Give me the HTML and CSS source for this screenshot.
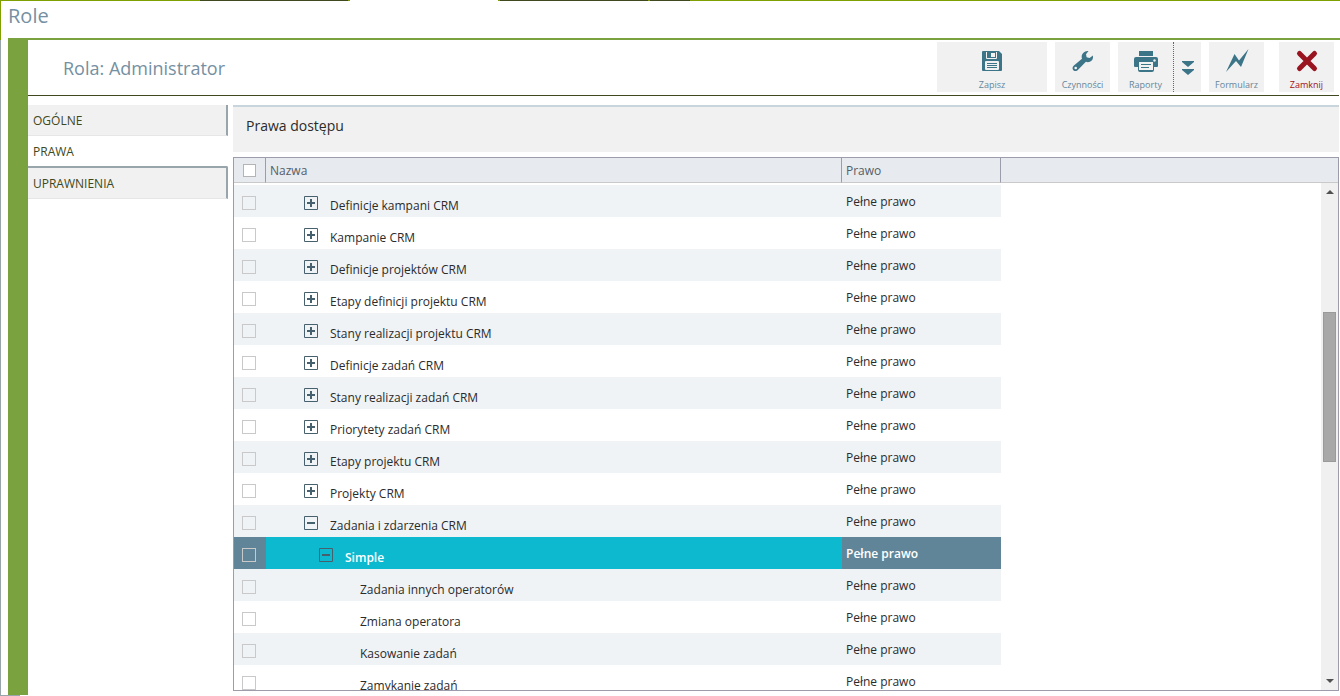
FILE: index.html
```
<!DOCTYPE html>
<html lang="pl">
<head>
<meta charset="utf-8">
<title>Role</title>
<link rel="stylesheet" href="styles.css">
</head>
<body>
<svg class="defs" aria-hidden="true">
  <symbol id="plus" viewBox="0 0 14 14"><path d="M.5.5h13v13H.5z" fill="none" stroke="currentColor"/><path d="M3 6h3V3h2v3h3v2H8v3H6V8H3z" fill="currentColor"/></symbol>
  <symbol id="minus" viewBox="0 0 14 14"><path d="M.5.5h13v13H.5z" fill="none" stroke="currentColor"/><path d="M3 6h8v2H3z" fill="currentColor"/></symbol>
</svg>
<div class="app">
  <div class="strip"></div>
  <h1 class="page-title">Role</h1>
  <main class="panel">
    <header class="panel-head">
      <h2 class="panel-title">Rola: Administrator</h2>
      <div class="toolbar">
        <button class="tool tool-wide" type="button">
          <svg class="tool-icon" viewBox="0 0 24 24"><path fill="currentColor" d="M2 3q0-1 1-1h16l3 3v16q0 1-1 1H3q-1 0-1-1z"/><path fill="#f1f1f1" d="M6 3h11v6q0 1-1 1H7q-1 0-1-1zM5 13q0-1 1-1h12q1 0 1 1v7q0 1-1 1H6q-1 0-1-1z"/><path fill="currentColor" d="M7 3h9v6H7z"/><path fill="#f1f1f1" d="M11 4h4v4h-4z"/><path fill="currentColor" d="M7 14h10v1H7zM7 16h10v1H7zM7 18h10v1H7z"/></svg>
          <span>Zapisz</span>
        </button>
        <button class="tool" type="button">
          <svg class="tool-icon" viewBox="0 0 24 24"><path fill="currentColor" d="M17.500 2.100 15 5.300l.6 3 3 .7 3.300-2.400c.6 3-.6 5.300-3 6.200-1.500.6-2.800.5-4-.1L7.300 20.500C5.500 22.600 3 22.300 2 20.700c-.9-1.500-.4-3 .9-4.100L11 9.800C10.300 7.800 10.600 5.600 12.200 4 13.600 2.500 15.600 1.700 17.500 2.100z"/><circle cx="4.700" cy="19" r="1.300" fill="#f1f1f1"/></svg>
          <span>Czynności</span>
        </button>
        <div class="split">
          <button class="tool" type="button">
            <svg class="tool-icon" viewBox="0 0 24 24"><path fill="currentColor" d="M5 2h14v5H5zM2 8h20q2 0 2 2v7q0 1-1 1h-3v-4H4v4H1q-1 0-1-1v-7q0-2 2-2z"/><circle cx="20.500" cy="11.500" r="1.200" fill="#f1f1f1"/><path fill="#f1f1f1" d="M5 13h14v8H5z"/><path fill="currentColor" d="M4 13h1v8h14v-8h1v8q0 2-2 2H6q-2 0-2-2zM7 15h10v1H7zM7 18h8v1H7z"/></svg>
            <span>Raporty</span>
          </button>
          <button class="tool tool-more" type="button" aria-label="Więcej raportów">
            <svg class="more-icon" viewBox="0 0 12 14"><path fill="currentColor" d="M0 0h12v1L6 6 0 1zM0 8h12v1l-6 5-6-5z"/></svg>
          </button>
        </div>
        <button class="tool" type="button">
          <svg class="tool-icon" viewBox="0 0 24 24"><path fill="currentColor" d="M1 23 9.500 5l4.500 6.500L23.500 0 16 18l-5-6z"/></svg>
          <span>Formularz</span>
        </button>
        <button class="tool tool-close" type="button">
          <svg class="tool-icon" viewBox="0 0 24 24"><path fill="none" stroke="currentColor" stroke-width="5" stroke-linecap="round" d="M4.500 4.500l15 15M19.500 4.500l-15 15"/></svg>
          <span>Zamknij</span>
        </button>
      </div>
    </header>
    <div class="panel-body">
      <nav class="tabs">
        <button class="tab" type="button">OGÓLNE</button>
        <button class="tab tab-active" type="button">PRAWA</button>
        <button class="tab tab-after" type="button">UPRAWNIENIA</button>
      </nav>
      <section class="content">
        <h3 class="section-title">Prawa dostępu</h3>
        <div class="grid">
          <table class="table table-head">
            <colgroup><col class="c-check"><col class="c-name"><col class="c-right"><col></colgroup>
            <thead><tr><th><input class="check check-all" type="checkbox" aria-label="Zaznacz wszystko"></th><th>Nazwa</th><th>Prawo</th><th></th></tr></thead>
          </table>
          <div class="scroll">
            <div class="rows">
              <table class="table table-body">
                <colgroup><col class="c-check"><col class="c-name"><col class="c-right"></colgroup>
                <tbody>
                  <tr><td><input class="check" type="checkbox" aria-label="Definicje kampani CRM"></td><td><div class="node"><button class="toggle" type="button" aria-label="Rozwiń"><svg><use href="#plus"/></svg></button>Definicje kampani CRM</div></td><td>Pełne prawo</td></tr>
                  <tr><td><input class="check" type="checkbox" aria-label="Kampanie CRM"></td><td><div class="node"><button class="toggle" type="button" aria-label="Rozwiń"><svg><use href="#plus"/></svg></button>Kampanie CRM</div></td><td>Pełne prawo</td></tr>
                  <tr><td><input class="check" type="checkbox" aria-label="Definicje projektów CRM"></td><td><div class="node"><button class="toggle" type="button" aria-label="Rozwiń"><svg><use href="#plus"/></svg></button>Definicje projektów CRM</div></td><td>Pełne prawo</td></tr>
                  <tr><td><input class="check" type="checkbox" aria-label="Etapy definicji projektu CRM"></td><td><div class="node"><button class="toggle" type="button" aria-label="Rozwiń"><svg><use href="#plus"/></svg></button>Etapy definicji projektu CRM</div></td><td>Pełne prawo</td></tr>
                  <tr><td><input class="check" type="checkbox" aria-label="Stany realizacji projektu CRM"></td><td><div class="node"><button class="toggle" type="button" aria-label="Rozwiń"><svg><use href="#plus"/></svg></button>Stany realizacji projektu CRM</div></td><td>Pełne prawo</td></tr>
                  <tr><td><input class="check" type="checkbox" aria-label="Definicje zadań CRM"></td><td><div class="node"><button class="toggle" type="button" aria-label="Rozwiń"><svg><use href="#plus"/></svg></button>Definicje zadań CRM</div></td><td>Pełne prawo</td></tr>
                  <tr><td><input class="check" type="checkbox" aria-label="Stany realizacji zadań CRM"></td><td><div class="node"><button class="toggle" type="button" aria-label="Rozwiń"><svg><use href="#plus"/></svg></button>Stany realizacji zadań CRM</div></td><td>Pełne prawo</td></tr>
                  <tr><td><input class="check" type="checkbox" aria-label="Priorytety zadań CRM"></td><td><div class="node"><button class="toggle" type="button" aria-label="Rozwiń"><svg><use href="#plus"/></svg></button>Priorytety zadań CRM</div></td><td>Pełne prawo</td></tr>
                  <tr><td><input class="check" type="checkbox" aria-label="Etapy projektu CRM"></td><td><div class="node"><button class="toggle" type="button" aria-label="Rozwiń"><svg><use href="#plus"/></svg></button>Etapy projektu CRM</div></td><td>Pełne prawo</td></tr>
                  <tr><td><input class="check" type="checkbox" aria-label="Projekty CRM"></td><td><div class="node"><button class="toggle" type="button" aria-label="Rozwiń"><svg><use href="#plus"/></svg></button>Projekty CRM</div></td><td>Pełne prawo</td></tr>
                  <tr><td><input class="check" type="checkbox" aria-label="Zadania i zdarzenia CRM"></td><td><div class="node"><button class="toggle" type="button" aria-label="Zwiń"><svg><use href="#minus"/></svg></button>Zadania i zdarzenia CRM</div></td><td>Pełne prawo</td></tr>
                  <tr class="selected"><td><input class="check" type="checkbox" aria-label="Simple"></td><td><div class="node node-child"><button class="toggle" type="button" aria-label="Zwiń"><svg><use href="#minus"/></svg></button>Simple</div></td><td>Pełne prawo</td></tr>
                  <tr><td><input class="check" type="checkbox" aria-label="Zadania innych operatorów"></td><td><div class="node node-leaf">Zadania innych operatorów</div></td><td>Pełne prawo</td></tr>
                  <tr><td><input class="check" type="checkbox" aria-label="Zmiana operatora"></td><td><div class="node node-leaf">Zmiana operatora</div></td><td>Pełne prawo</td></tr>
                  <tr><td><input class="check" type="checkbox" aria-label="Kasowanie zadań"></td><td><div class="node node-leaf">Kasowanie zadań</div></td><td>Pełne prawo</td></tr>
                  <tr><td><input class="check" type="checkbox" aria-label="Zamykanie zadań"></td><td><div class="node node-leaf">Zamykanie zadań</div></td><td>Pełne prawo</td></tr>
                </tbody>
              </table>
            </div>
            <div class="scrollbar">
              <svg class="arrow" viewBox="0 0 8 4"><path d="M4 0l4 4H0z" fill="#505050"/></svg>
              <div class="track"><div class="thumb"></div></div>
              <svg class="arrow" viewBox="0 0 8 4"><path d="M0 0h8L4 4z" fill="#505050"/></svg>
            </div>
          </div>
        </div>
      </section>
    </div>
  </main>
</div>
</body>
</html>
```
FILE: styles.css
```
* { box-sizing: border-box; }
body {
  margin: 0;
  background: #fff;
  color: #2b2b2b;
  font: 12px/16px "Open Sans", "Noto Sans", sans-serif;
}
button { font: inherit; border: 0; padding: 0; margin: 0; background: none; cursor: pointer; }
h1, h2, h3 { margin: 0; font-weight: 400; }
.defs { display: none; }

.app {
  display: flex;
  flex-direction: column;
  height: 100vh;
  padding: 0 0 1px 8px;
  background:
    linear-gradient(#7ea000, #7ea000) 0 0 / 1px 40px no-repeat,
    linear-gradient(#98a5ab, #98a5ab) 0 40px / 1px 100% no-repeat,
    linear-gradient(#98a5ab, #98a5ab) 0 100% / 20px 1px no-repeat;
}
.strip {
  flex: none;
  height: 1px;
  margin-left: -8px;
  background: linear-gradient(90deg,
    #7ea000 200px, #404820 200px 348px, #7ea000 348px 350px, #fff 350px 498px,
    #7ea000 498px 500px, #404820 500px 648px, #7ea000 648px 650px,
    #404820 650px 690px, #7ea000 690px);
}
.page-title {
  flex: none;
  height: 37px;
  color: #7590a2;
  font-size: 20px;
  line-height: 30px;
}
.panel {
  flex: 1;
  min-height: 0;
  display: flex;
  flex-direction: column;
  border-top: 2px solid #7aa23f;
  border-left: 20px solid #7aa23f;
}
.panel-head {
  flex: none;
  display: flex;
  justify-content: space-between;
  height: 56px;
  padding: 2px 5px 0 35px;
  margin-right: 1px;
  border-bottom: 1px solid #404820;
}
.panel-title { color: #7590a2; font-size: 18px; line-height: 52px; }

.toolbar { display: flex; gap: 8px; height: 50px; }
.tool {
  display: flex;
  flex-direction: column;
  align-items: center;
  gap: 5px;
  width: 55px;
  height: 50px;
  padding-top: 7px;
  background: #f1f1f1;
  color: #66869a;
  font-size: 9px;
  line-height: 14px;
}
.tool-wide { width: 110px; }
.tool-icon { width: 24px; height: 24px; color: #3c7488; }
.split { display: flex; }
.tool-more { width: 28px; padding-top: 19px; border-left: 1px dotted #3c7488; }
.more-icon { width: 12px; height: 14px; color: #3c7488; }
.tool-close { margin-left: 7px; color: #a01020; }
.tool-close .tool-icon { color: #9a141f; }

.panel-body { flex: 1; min-height: 0; display: flex; gap: 5px; padding-top: 9px; }
.tabs { flex: none; width: 200px; }
.tab {
  display: block;
  width: 100%;
  height: 31px;
  padding: 2px 0 0 5px;
  text-align: left;
  color: #404820;
  background: #f1f1f1;
  border-right: 2px solid #98a5ab;
  border-bottom: 1px solid #e6e6e6;
}
.tab-active { height: 30px; background: #fff; border: 0; }
.tab-after { height: 33px; border-top: 2px solid #98a5ab; border-top-right-radius: 2px; }

.content { flex: 1; min-width: 0; display: flex; flex-direction: column; gap: 5px; padding: 0 1px 4px 0; }
.section-title {
  flex: none;
  height: 47px;
  padding-left: 13px;
  border-top: 2px solid #c8d5dc;
  background: #f1f1f1;
  font-size: 14px;
  line-height: 38px;
}
.grid { flex: 1; min-height: 0; display: flex; flex-direction: column; border: 1px solid #9c9caa; }
.table { table-layout: fixed; border-collapse: separate; border-spacing: 0; }
.c-check { width: 32px; }
.c-name { width: 576px; }
.c-right { width: 159px; }
.table-head { flex: none; width: 100%; background: #e7eaef; color: #555d66; }
.table-head th {
  height: 25px;
  padding: 2px 4px 0;
  text-align: left;
  font-weight: 400;
  border-right: 1px solid #9c9caa;
  border-bottom: 1px solid #c9c9c9;
}
.table-head th:first-child { padding: 0 0 0 9px; }
.table-head th:last-child { border-right: 0; }
.scroll { flex: 1; min-height: 0; display: flex; justify-content: space-between; }
.rows { padding-top: 2px; overflow: hidden; }
.table-body { width: 767px; }
.table-body td { height: 32px; padding: 9px 4px 0; vertical-align: top; }
.table-body td:first-child { padding: 11px 0 0 8px; }
.table-body td:nth-child(2) { padding: 11px 0 0 38px; }
.table-body tr:nth-child(odd) { background: #eff3f6; }
.table-body .selected { color: #fff; font-weight: 600; }
.selected td { background: #608598; }
.selected td:nth-child(2) { background: #0cb9cf; }
.check {
  appearance: none;
  display: block;
  width: 14px;
  height: 14px;
  margin: 0;
  border: 1px solid #c9c9c9;
  background: transparent;
}
.check-all { width: 13px; height: 13px; border-color: #b4b4b4; background: #fff; }
.node { display: flex; gap: 12px; line-height: 20px; }
.node-child { padding-left: 15px; }
.node-leaf { padding-left: 56px; }
.toggle { width: 14px; height: 14px; color: #46606e; }
.toggle svg { display: block; width: 14px; height: 14px; }
.scrollbar {
  flex: none;
  display: flex;
  flex-direction: column;
  align-items: center;
  width: 17px;
  padding: 7px 0;
  background: #f0f0f0;
}
.arrow { width: 8px; height: 4px; }
.track { flex: 1; width: 13px; padding-top: 118px; }
.thumb { height: 150px; border: 1px solid #9a9a9a; background: #a8a8a8; }
```
